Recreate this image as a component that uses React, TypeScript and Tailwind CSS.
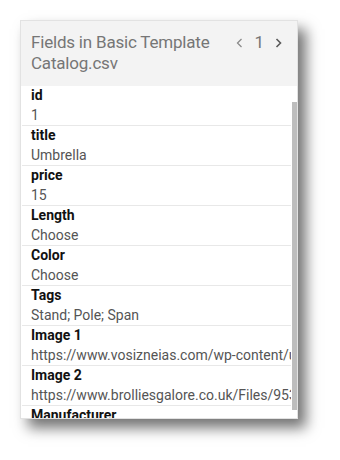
import React from "react";

const rows: [string, string][] = [
  ["id", "1"],
  ["title", "Umbrella"],
  ["price", "15"],
  ["Length", "Choose"],
  ["Color", "Choose"],
  ["Tags", "Stand; Pole; Span"],
  ["Image 1", "https://www.vosizneias.com/wp-content/uploads/umbrella.jpg"],
  ["Image 2", "https://www.brolliesgalore.co.uk/Files/953/umbrella.jpg"],
  ["Manufacturer", "Acme"],
];

export default function App() {
  return (
    <div className="w-[340px] h-[460px] bg-white pt-[20px] pl-[20px]" style={{ fontFamily: "Roboto, 'Liberation Sans', sans-serif" }}>
      <div className="w-[278px] h-[399px] bg-white border border-[#e2e2e2] shadow-[8px_9px_13px_rgba(0,0,0,0.55)] flex flex-col overflow-hidden">
        <div className="bg-[#f3f3f3] flex items-start justify-between pt-[11px] pb-[12px] pl-[10px] pr-[14px]">
          <div className="text-[17px] leading-[21px] text-[#767676] w-[190px] tracking-[-0.2px]">
            Fields in Basic Template Catalog.csv
          </div>
          <div className="flex items-center gap-[10px] h-[21px] text-[#767676]">
            <svg width="9" height="12" viewBox="0 0 9 12" fill="none">
              <path d="M6.5 2 L2.5 6 L6.5 10" stroke="#8a8a8a" strokeWidth="1.3" />
            </svg>
            <span className="text-[17px] leading-[21px]">1</span>
            <svg width="9" height="12" viewBox="0 0 9 12" fill="none">
              <path d="M2.5 2 L6.5 6 L2.5 10" stroke="#5a5a5a" strokeWidth="1.6" />
            </svg>
          </div>
        </div>
        <div className="flex-1 flex overflow-hidden">
          <div className="flex-1 min-w-0 overflow-hidden">
            {rows.map(([k, v], i) => (
              <div key={k} className={"mx-[1px] pl-[9px] " + (i < rows.length - 1 ? "border-b border-[#e8e8e8]" : "")}>
                <div className="text-[14px] leading-[19px] font-bold text-[#111111] whitespace-nowrap">{k}</div>
                <div className="text-[14px] leading-[20px] text-[#555555] whitespace-nowrap overflow-hidden">{v}</div>
              </div>
            ))}
          </div>
          <div className="w-[5px] pt-[16px] pb-[8px] flex">
            <div className="flex-1 bg-[#bdbdbd]" />
          </div>
        </div>
      </div>
    </div>
  );
}
